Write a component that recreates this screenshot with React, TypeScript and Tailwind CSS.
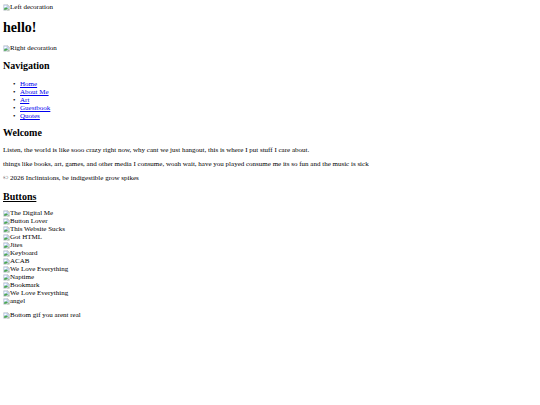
import React from "react";

const navLinks = [
  { name: "Home", href: "#home" },
  { name: "About Me", href: "#about" },
  { name: "Art", href: "#art" },
  { name: "Guestbook", href: "#guestbook" },
  { name: "Quotes", href: "#quotes" },
];

const buttons = [
  "The Digital Me",
  "Button Lover",
  "This Website Sucks",
  "Got HTML",
  "Jites",
  "Keyboard",
  "ACAB",
  "We Love Everything",
  "Naptime",
  "Bookmark",
  "We Love Everything",
  "angel",
];

// Torn picture icon followed by the alt text
function MissingImage({ alt }: { alt: string }) {
  return (
    <div className="flex items-center">
      <svg viewBox="0 0 16 16" className="h-[7px] w-[7px] shrink-0" aria-hidden="true">
        <path d="M1.5 1.5h9l4 4v3l-7 6h-6z" fill="#c3d7f7" stroke="#b0b0b0" strokeWidth="1" />
        <path d="M10.5 1.5v4h4z" fill="#fff" stroke="#b0b0b0" strokeWidth="1" />
        <path d="M3 6c0-2 3-3 4-1 2 0 2 2 1 2H3z" fill="#fff" />
        <path d="M2 13c0-3 3-5 5-5s3 1 4 2l-4 3z" fill="#4ca64c" />
        <path d="M14.5 10.5v4h-5z" fill="#8fc08f" stroke="#b0b0b0" strokeWidth="1" />
      </svg>
      <span>{alt}</span>
    </div>
  );
}

export default function App() {
  return (
    <main className="bg-white p-[3px] font-['Liberation_Serif','Times_New_Roman',serif] text-[7px] leading-[8px] text-black">
      <MissingImage alt="Left decoration" />
      <h1 className="my-2 text-[14px] leading-[17px] font-bold">hello!</h1>
      <MissingImage alt="Right decoration" />

      <nav>
        <h2 className="my-2 text-[10px] leading-[12px] font-bold">Navigation</h2>
        <ul className="pl-[10px]">
          {navLinks.map((link) => (
            <li key={link.name} className="flex before:w-[7px] before:content-['•']">
              <a href={link.href} className="text-[#0000ee] underline">
                {link.name}
              </a>
            </li>
          ))}
        </ul>
      </nav>

      <section>
        <h2 className="my-[7px] text-[10px] leading-[12px] font-bold">Welcome</h2>
        <div className="flex flex-col gap-[6px]">
          <p>
            Listen, the world is like sooo crazy right now, why cant we just hangout, this is where I put stuff I care about.
          </p>
          <p>
            things like books, art, games, and other media I consume, woah wait, have you played consume me its so fun and the music is sick
          </p>
          <p>© 2026 Inclintaions, be indigestible grow spikes</p>
        </div>
      </section>

      <section>
        <h2 className="mt-[9px] mb-[6px] text-[10px] leading-[12px] font-bold underline">Buttons</h2>
        {buttons.map((name, i) => (
          <MissingImage key={i} alt={name} />
        ))}
      </section>

      <footer className="mt-[6px]">
        <MissingImage alt="Bottom gif you arent real" />
      </footer>
    </main>
  );
}
